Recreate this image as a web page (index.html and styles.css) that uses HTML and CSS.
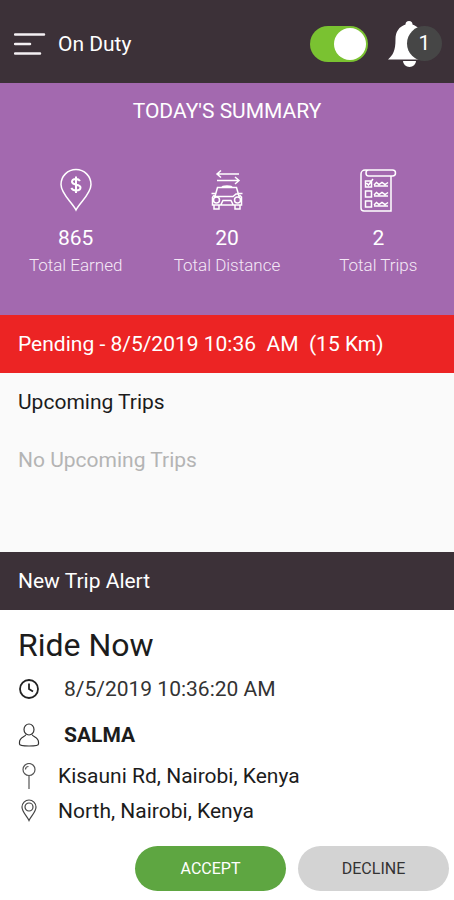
FILE: index.html
```html
<!DOCTYPE html>
<html lang="en">
<head>
  <meta charset="UTF-8">
  <meta name="viewport" content="width=device-width, initial-scale=1.0">
  <title>Driver Dashboard</title>
  <link rel="stylesheet" href="styles.css">
</head>
<body>
  <header class="topbar">
    <button type="button" class="menu" aria-label="Menu">
      <svg width="32" height="24" viewBox="0 0 32 24" fill="none" stroke="#f4f0f3" stroke-width="2.500">
        <path d="M1 2.500H30M1 12H16M1 21.500H26" stroke-linecap="round"/>
      </svg>
    </button>
    <label for="duty" class="duty-label">On Duty</label>
    <input type="checkbox" id="duty" class="toggle" checked>
    <button type="button" class="bell" aria-label="Notifications">
      <svg width="42" height="46" viewBox="0 0 42 46" fill="#fff">
        <path d="M17.500 3.500a3.500 3.500 0 0 1 7 0C31 5.500 34 11 34 18C34 30 37 34 42 38.500H0C5 34 7.500 30 7.500 18C7.500 11 11 5.500 17.500 3.500Z"/>
        <path d="M15 40H28A6.500 6 0 0 1 15 40Z"/>
      </svg>
      <span class="badge">1</span>
    </button>
  </header>

  <section class="summary">
    <h2>TODAY'S SUMMARY</h2>
    <div class="stats">
      <div class="stat">
        <svg width="44" height="44" viewBox="0 0 44 44" fill="none" stroke="#fff" stroke-width="1.500">
          <path d="M22 42C18 34 7 26 7 16.500a15 15 0 0 1 30 0C37 26 26 34 22 42Z"/>
          <path stroke-width="2" d="M26 13C25 11.500 23.500 11 22 11c-2.500 0-4 1.200-4 2.800 0 4 8.500 1.800 8.500 5.700 0 1.700-2 2.900-4.500 2.900-2 0-3.700-.7-4.700-2.400M22 8.500V25"/>
        </svg>
        <strong>865</strong>
        <span>Total Earned</span>
      </div>
      <div class="stat">
        <svg width="44" height="44" viewBox="0 0 44 44" fill="none" stroke="#fff" stroke-width="1.500">
          <path d="M34 6H12M16 2.500L12 6L16 9.500M12 12.500H34M30 9L34 12.500L30 16"/>
          <path d="M17 19.500C17 17.500 27 17.500 27 19.500M9.500 30L12.500 19.500H31.500L34.500 30M9 28.500H28L31 26H34M6.500 25.500H10.500M33.500 25.500H37.500"/>
          <path d="M7.500 29V37H36.500V29L34.500 27M9.500 27L7.500 29M16 36.500L18 32.500H26L28 36.500M9 37V41H14V37M30 37V41H35V37"/>
          <circle cx="11.500" cy="32" r="3"/>
          <circle cx="32.500" cy="32" r="3"/>
        </svg>
        <strong>20</strong>
        <span>Total Distance</span>
      </div>
      <div class="stat">
        <svg width="44" height="44" viewBox="0 0 44 44" fill="none" stroke="#fff" stroke-width="1.500">
          <path d="M9 2H36.500a3 3 0 0 1 0 6H12.500a2.500 3 0 0 1 0-6M9 2a4 4 0 0 0-4 4V40a3 3 0 0 0 3 3H35V8"/>
          <path d="M9.500 13H15.500V19H9.500ZM9.500 23H15.500V29H9.500ZM9.500 33H15.500V39H9.500ZM10.500 15L12.500 17L17 11"/>
          <path d="M18 17L20.500 14.500L23 16.500L26 14.500L29 16.500L32 14.500M18 27L20.500 24.500L23 26.500L26 24.500L29 26.500L32 24.500M18 37L20.500 34.500L23 36.500L26 34.500L29 36.500L32 34.500M18 18H32M18 28H32M18 38H32"/>
        </svg>
        <strong>2</strong>
        <span>Total Trips</span>
      </div>
    </div>
  </section>

  <div class="bar pending">Pending - 8/5/2019 10:36&nbsp; AM&nbsp; (15 Km)</div>

  <section class="upcoming">
    <h3>Upcoming Trips</h3>
    <p>No Upcoming Trips</p>
  </section>

  <div class="bar alert">New Trip Alert</div>

  <section class="trip">
    <h1>Ride Now</h1>
    <div class="row time">
      <svg width="22" height="24" viewBox="0 0 22 24" fill="none" stroke="#222" stroke-width="1.800">
        <circle cx="11" cy="12" r="9"/>
        <path d="M11 6.500V12L15 14.500"/>
      </svg>
      <span>8/5/2019 10:36:20 AM</span>
    </div>
    <div class="row rider">
      <svg width="22" height="24" viewBox="0 0 22 24" fill="none" stroke="#333" stroke-width="1.200">
        <ellipse cx="11" cy="6.500" rx="5" ry="5.500"/>
        <path d="M8 11.500C7.500 14 1.500 14 1.500 19V21C1.500 22.500 4 23 11 23S20.500 22.500 20.500 21V19C20.500 14 14.500 14 14 11.500"/>
      </svg>
      <strong>SALMA</strong>
    </div>
    <div class="row place">
      <svg width="22" height="26" viewBox="0 0 22 26" fill="none" stroke="#555" stroke-width="1.200">
        <circle cx="11" cy="6.500" r="6"/>
        <path d="M11 12.500V26M7.500 6.500a3 3 0 0 1 3-3"/>
      </svg>
      <span>Kisauni Rd, Nairobi, Kenya</span>
    </div>
    <div class="row place">
      <svg width="22" height="24" viewBox="0 0 22 24" fill="none" stroke="#444" stroke-width="1.200">
        <path d="M11 21.500C9 17 4 13 4 8a7 7 0 0 1 14 0C18 13 13 17 11 21.500Z"/>
        <circle cx="11" cy="8" r="4"/>
      </svg>
      <span>North, Nairobi, Kenya</span>
    </div>
    <div class="actions">
      <button type="button" class="accept">ACCEPT</button>
      <button type="button" class="decline">DECLINE</button>
    </div>
  </section>
</body>
</html>
```
FILE: styles.css
```css
* {
  box-sizing: border-box;
}
body {
  margin: 0;
  font-family: Roboto, sans-serif;
  font-size: 21px;
  line-height: 24px;
  color: #1c1c1c;
  background-color: #fff;
}
h1, h2, h3, p {
  margin: 0;
  font-weight: 400;
}
button {
  font-family: inherit;
  border: none;
  padding: 0;
  cursor: pointer;
}
svg {
  display: block;
}

/* Top bar */
.topbar {
  display: flex;
  align-items: center;
  height: 83px;
  padding: 4px 12px 0 14px;
  background-color: #3c3138;
  color: #fff;
}
.menu {
  background: none;
  margin-right: 12px;
}
.duty-label {
  flex: 1;
}
.toggle {
  appearance: none;
  width: 58px;
  height: 36px;
  margin: 0 20px 0 0;
  padding: 2px;
  border-radius: 18px;
  background-color: #7ac231;
  cursor: pointer;
}
.toggle::before {
  content: "";
  display: block;
  width: 32px;
  height: 32px;
  border-radius: 50%;
  background-color: #fff;
}
.toggle:checked::before {
  margin-left: auto;
}
.bell {
  position: relative;
  width: 54px;
  background: none;
}
.badge {
  position: absolute;
  top: 5px;
  right: 0;
  width: 35px;
  height: 35px;
  border-radius: 50%;
  background-color: #464646;
  color: #fff;
  font-size: 21px;
  line-height: 35px;
}

/* Summary */
.summary {
  height: 232px;
  padding-top: 16px;
  background-color: #a369af;
  color: #fff;
  text-align: center;
}
.summary h2 {
  font-size: 21px;
  line-height: 24px;
}
.stats {
  display: grid;
  grid-template-columns: repeat(3, 1fr);
  margin-top: 45px;
}
.stat {
  display: flex;
  flex-direction: column;
  align-items: center;
}
.stat strong {
  margin-top: 14px;
  font-weight: 400;
  font-size: 21px;
}
.stat span {
  margin-top: 3px;
  font-size: 17px;
  font-weight: 300;
  color: #f4e8f6;
}

.bar {
  height: 58px;
  padding: 0 18px;
  line-height: 58px;
  color: #fff;
}
.pending {
  background-color: #ec2424;
}
.alert {
  background-color: #3c3138;
}

/* Upcoming trips */
.upcoming {
  height: 179px;
  padding: 17px 18px;
  background-color: #fafafa;
}
.upcoming h3 {
  font-size: 21px;
}
.upcoming p {
  margin-top: 34px;
  color: #b4b4b4;
}

/* Trip details */
.trip {
  padding: 16px 5px 8px 18px;
}
.trip h1 {
  font-size: 32px;
  line-height: 38px;
}
.row {
  display: flex;
  align-items: center;
}
.time, .rider {
  gap: 24px;
}
.time {
  margin-top: 13px;
  color: #333;
}
.rider {
  margin-top: 22px;
}
.rider strong {
  font-weight: 700;
}
.place {
  gap: 18px;
  margin-top: 10px;
}
.rider + .place {
  margin-top: 16px;
}
.actions {
  display: flex;
  justify-content: flex-end;
  gap: 12px;
  margin-top: 23px;
}
.actions button {
  width: 151px;
  height: 45px;
  border-radius: 23px;
  font-size: 16px;
}
.accept {
  background-color: #5ea641;
  color: #fff;
}
.decline {
  background-color: #d3d3d3;
  color: #333;
}
```
